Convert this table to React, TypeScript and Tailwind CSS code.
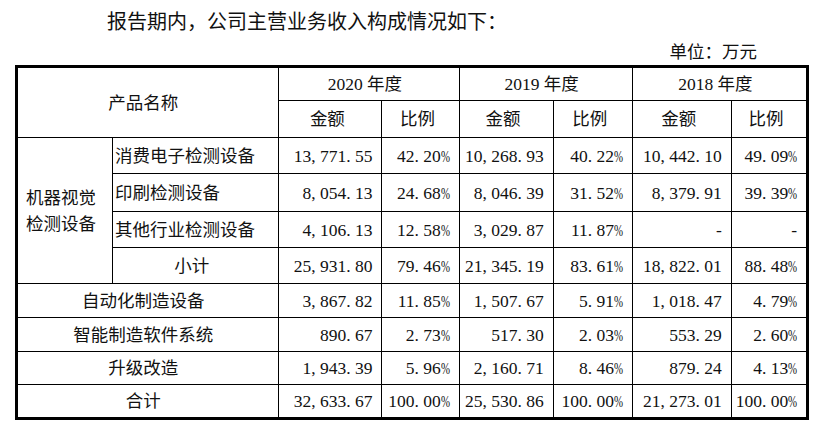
const serif = "font-['Liberation_Serif','Noto_Sans_CJK_SC',serif]";

// SimSun-like number: comma / period / percent take half an em each
function Num({ v }: { v: string }) {
  return (
    <span className="whitespace-nowrap">
      {v.split("").map((c, i) =>
        c === "," || c === "." ? (
          <span key={i} className="inline-block w-[0.5em] text-left">
            {c}
          </span>
        ) : c === "%" ? (
          <span key={i} className="inline-block w-[0.5em] text-left">
            <span className="inline-block origin-left scale-x-[0.62]">%</span>
          </span>
        ) : (
          <span key={i}>{c}</span>
        )
      )}
    </span>
  );
}

const cell = "border border-black p-0 align-middle";
const numCell = `${cell} text-right pr-[9px]`;

function NumCells({ vals }: { vals: string[] }) {
  return (
    <>
      {vals.map((v, i) => (
        <td key={i} className={numCell}>
          <Num v={v} />
        </td>
      ))}
    </>
  );
}

const subRows = [
  { name: "消费电子检测设备", vals: ["13,771.55", "42.20%", "10,268.93", "40.22%", "10,442.10", "49.09%"], h: "h-[36px]" },
  { name: "印刷检测设备", vals: ["8,054.13", "24.68%", "8,046.39", "31.52%", "8,379.91", "39.39%"], h: "h-[38px]" },
  { name: "其他行业检测设备", vals: ["4,106.13", "12.58%", "3,029.87", "11.87%", "-", "-"], h: "h-[36px]" },
];

const fullRows = [
  { name: "自动化制造设备", vals: ["3,867.82", "11.85%", "1,507.67", "5.91%", "1,018.47", "4.79%"], h: "h-[34px]" },
  { name: "智能制造软件系统", vals: ["890.67", "2.73%", "517.30", "2.03%", "553.29", "2.60%"], h: "h-[34px]" },
  { name: "升级改造", vals: ["1,943.39", "5.96%", "2,160.71", "8.46%", "879.24", "4.13%"], h: "h-[33px]" },
  { name: "合计", vals: ["32,633.67", "100.00%", "25,530.86", "100.00%", "21,273.01", "100.00%"], h: "h-[34px]" },
];

export default function App() {
  return (
    <div className={`w-[823px] h-[431px] bg-white text-[#111] ${serif}`}>
      <p className="pl-[107px] pt-[8px] text-[20px] leading-[28px]">
        报告期内，公司主营业务收入构成情况如下：
      </p>
      <div className="mt-[4px] flex justify-end pr-[66px] text-[17.5px] leading-[24px]">
        单位：万元
      </div>
      <table className="mt-[1px] ml-[15px] w-[794px] table-fixed border-collapse border-[3px] border-black text-[17.5px] leading-[24px]">
        <colgroup>
          <col className="w-[96px]" />
          <col className="w-[166px]" />
          <col className="w-[103px]" />
          <col className="w-[77px]" />
          <col className="w-[94px]" />
          <col className="w-[79px]" />
          <col className="w-[99px]" />
          <col className="w-[76px]" />
        </colgroup>
        <tbody>
          <tr className="h-[34px]">
            <td rowSpan={2} colSpan={2} className={`${cell} text-center pr-[10px]`}>
              产品名称
            </td>
            <td colSpan={2} className={`${cell} text-center pr-[8px]`}>2020 年度</td>
            <td colSpan={2} className={`${cell} text-center pr-[8px]`}>2019 年度</td>
            <td colSpan={2} className={`${cell} text-center pr-[8px]`}>2018 年度</td>
          </tr>
          <tr className="h-[37px]">
            {["金额", "比例", "金额", "比例", "金额", "比例"].map((t, i) => (
              <td key={i} className={`${cell} text-center pr-[6px]`}>
                {t}
              </td>
            ))}
          </tr>
          {subRows.map((r, i) => (
            <tr key={r.name} className={r.h}>
              {i === 0 && (
                <td rowSpan={4} className={`${cell} pl-[8px] text-left leading-[26px]`}>
                  机器视觉
                  <br />
                  检测设备
                </td>
              )}
              <td className={`${cell} pl-[2px] text-left`}>{r.name}</td>
              <NumCells vals={r.vals} />
            </tr>
          ))}
          <tr className="h-[36px]">
            <td className={`${cell} text-center pr-[8px]`}>小计</td>
            <NumCells vals={["25,931.80", "79.46%", "21,345.19", "83.61%", "18,822.01", "88.48%"]} />
          </tr>
          {fullRows.map((r) => (
            <tr key={r.name} className={r.h}>
              <td colSpan={2} className={`${cell} text-center pr-[10px]`}>
                {r.name}
              </td>
              <NumCells vals={r.vals} />
            </tr>
          ))}
        </tbody>
      </table>
    </div>
  );
}
